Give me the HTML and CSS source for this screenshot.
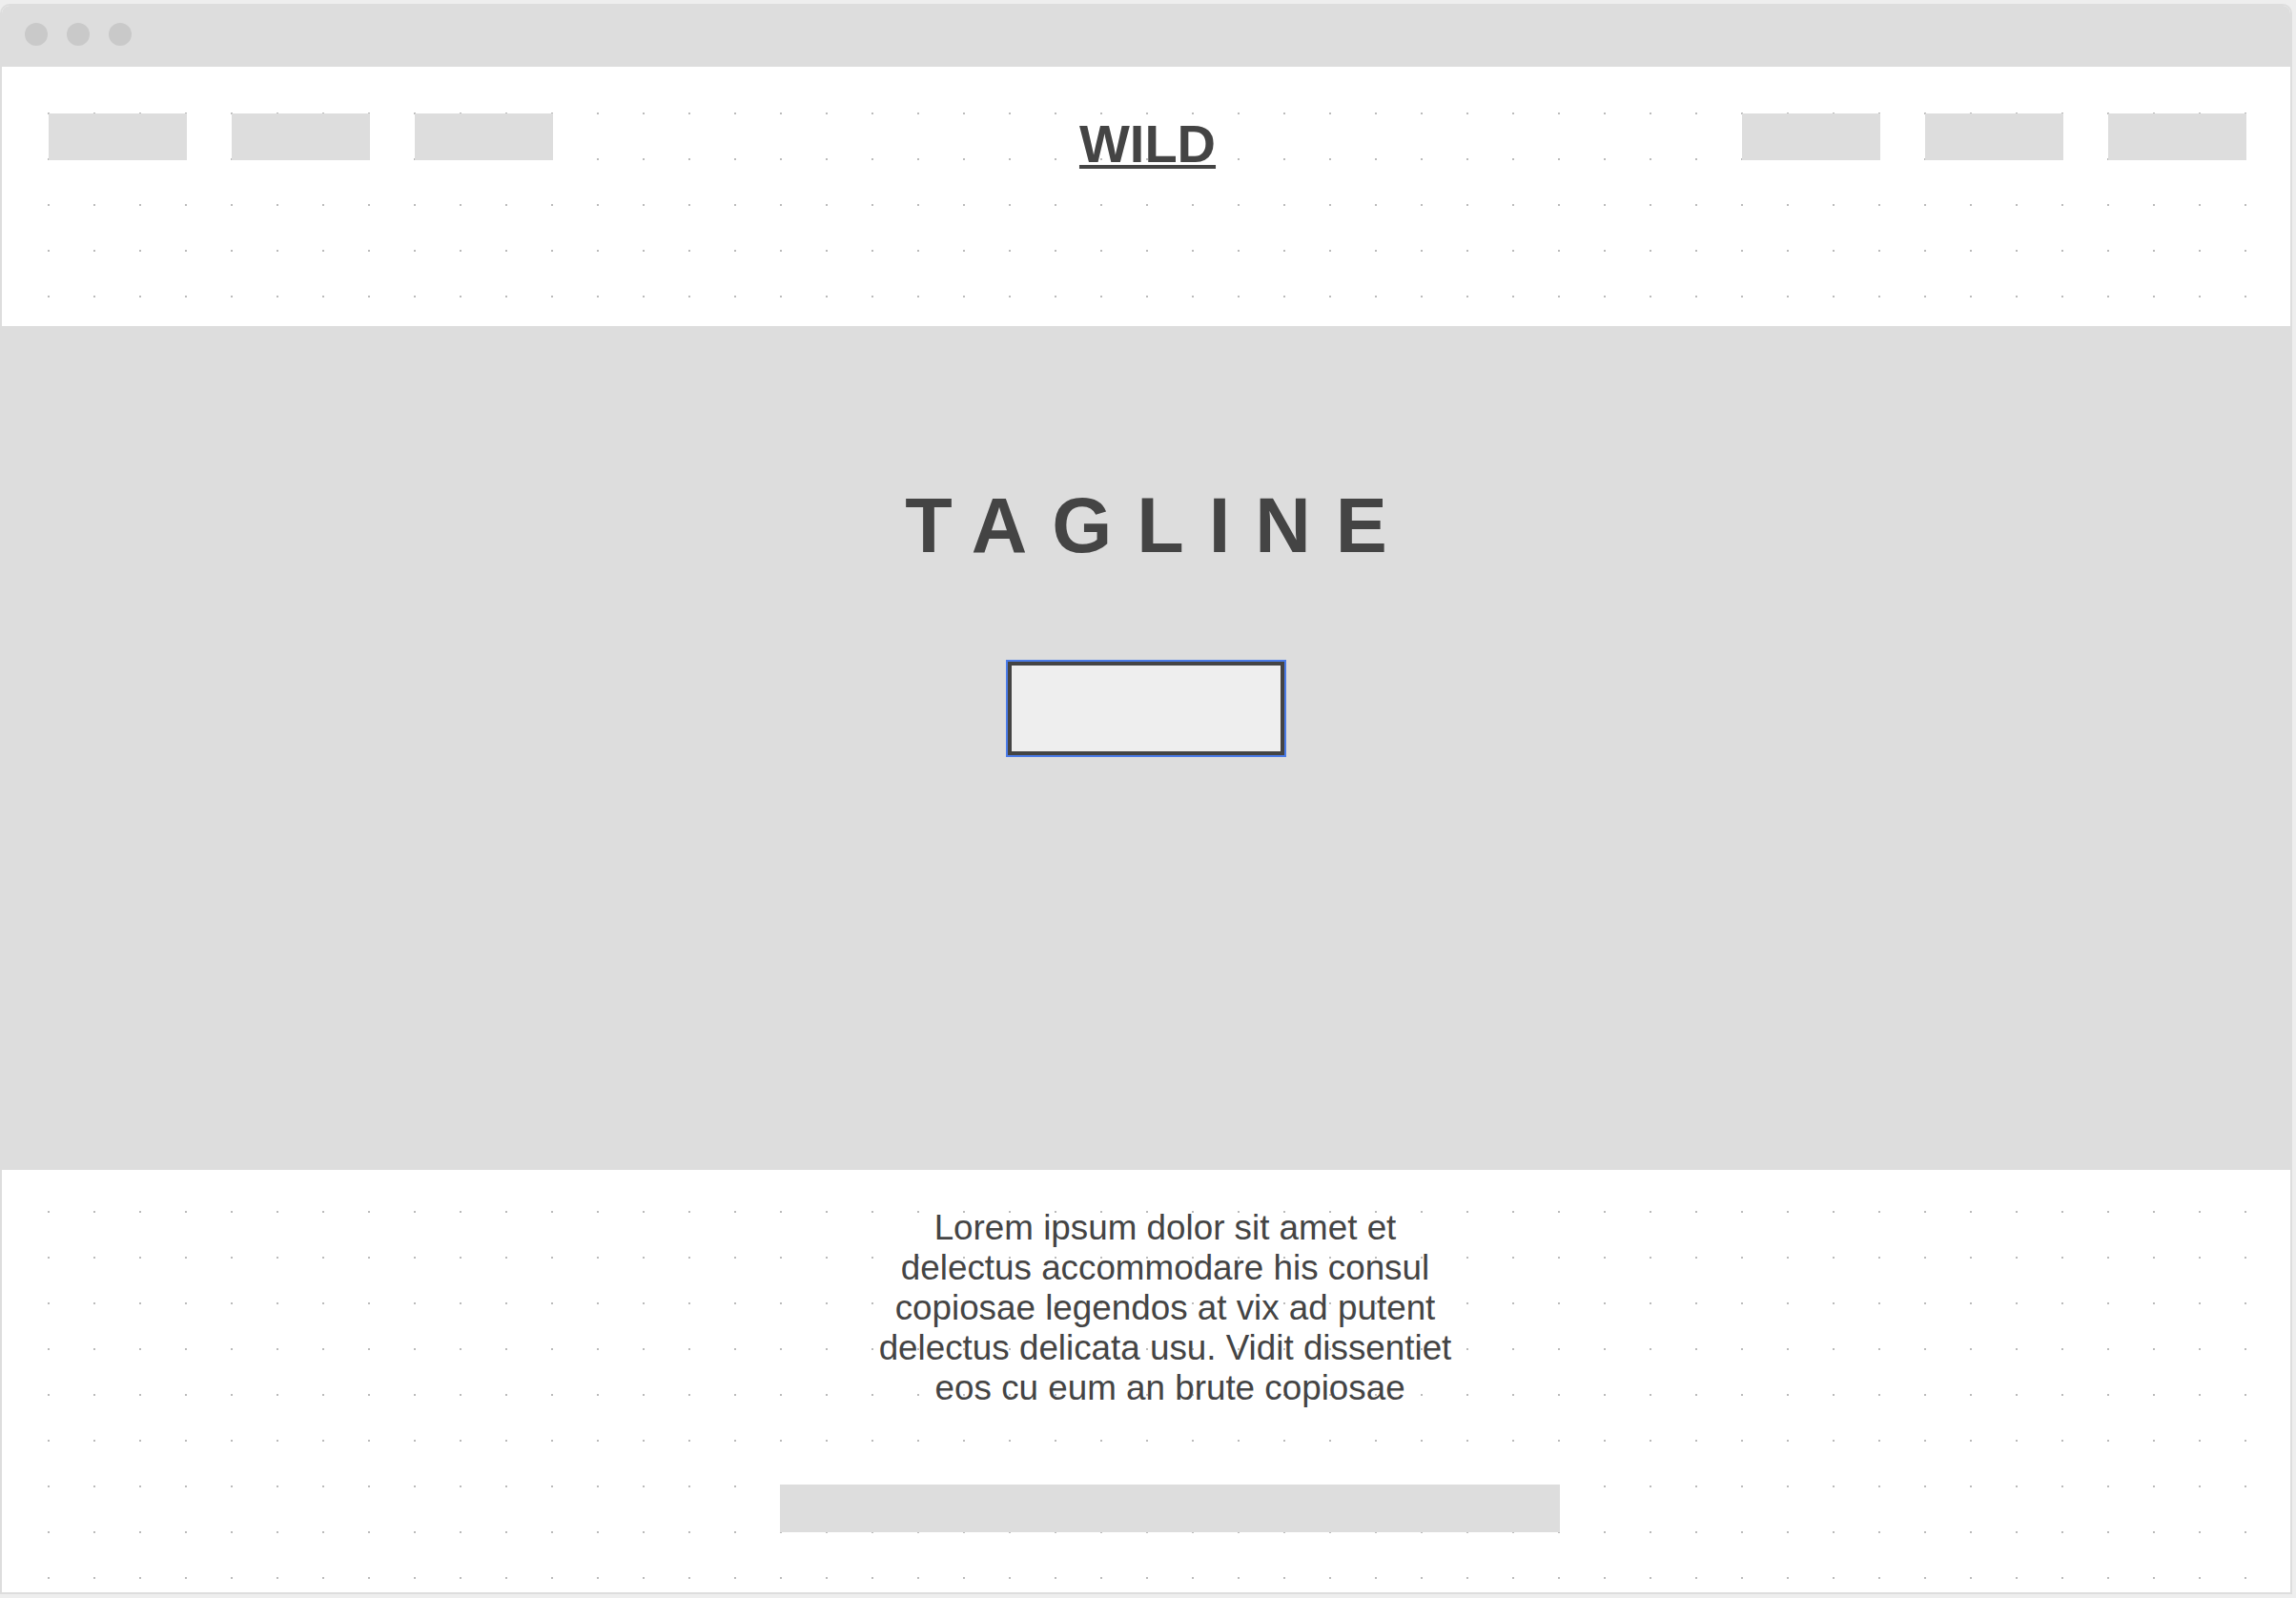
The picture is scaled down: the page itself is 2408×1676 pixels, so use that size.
FILE: index.html
```html
<!DOCTYPE html>
<html lang="en">
<head>
<meta charset="utf-8">
<title>WILD</title>
<link rel="stylesheet" href="styles.css">
</head>
<body>
<div class="window">
  <div class="titlebar">
    <span class="light"></span>
    <span class="light"></span>
    <span class="light"></span>
  </div>
  <div class="canvas">
    <header class="header">
      <nav class="nav nav-left">
        <span class="nav-box"></span>
        <span class="nav-box"></span>
        <span class="nav-box"></span>
      </nav>
      <a class="logo" href="#">WILD</a>
      <nav class="nav nav-right">
        <span class="nav-box"></span>
        <span class="nav-box"></span>
        <span class="nav-box"></span>
      </nav>
    </header>
    <section class="hero">
      <h1 class="tagline">TAGLINE</h1>
      <button class="cta" type="button"></button>
    </section>
    <section class="lower">
      <p class="copy">Lorem ipsum dolor sit amet et delectus accommodare his consul copiosae legendos at vix ad putent delectus delicata usu. Vidit dissentiet &nbsp;eos cu eum an brute copiosae</p>
      <div class="footer-bar"></div>
    </section>
  </div>
</div>
</body>
</html>
```

FILE: styles.css
```css
* {
  box-sizing: border-box;
}

html, body {
  margin: 0;
  padding: 0;
}

body {
  background: #eeeeee;
  padding-top: 4px;
  font-family: "Liberation Sans", Arial, sans-serif;
  color: #444444;
}

.window {
  width: 2404px;
  height: 1668px;
  border: 2px solid #dddddd;
  border-radius: 10px 10px 0 0;
  overflow: hidden;
  background: #ffffff;
  display: flex;
  flex-direction: column;
}

.titlebar {
  height: 64px;
  flex: none;
  background: #dddddd;
  display: flex;
  align-items: flex-start;
  gap: 20px;
  padding: 18px 0 0 24px;
}

.light {
  width: 24px;
  height: 24px;
  border-radius: 50%;
  background: #c9c9c9;
}

.canvas {
  flex: 1;
  display: flex;
  flex-direction: column;
  background-color: #ffffff;
  background-image: conic-gradient(from 270deg at 2px 2px, #bbbbbb 90deg, transparent 0);
  background-size: 48px 48px;
  background-position: 0 0;
  box-shadow: inset 2px 2px 0 #ffffff;
}

.header {
  height: 272px;
  flex: none;
  display: grid;
  grid-template-columns: 1fr auto 1fr;
  align-items: start;
  padding: 49px 46px 0 49px;
}

.nav {
  display: flex;
  gap: 47px;
}

.nav-right {
  justify-content: flex-end;
}

.nav-box {
  width: 145px;
  height: 49px;
  background: #dddddd;
}

.logo {
  display: block;
  padding-top: 4px;
  font-size: 56px;
  line-height: 56px;
  font-weight: 700;
  color: #444444;
  text-decoration: underline;
  text-decoration-thickness: 4px;
  text-underline-offset: 3px;
}

.hero {
  height: 885px;
  flex: none;
  background: #dddddd;
  display: flex;
  flex-direction: column;
  align-items: center;
}

.tagline {
  margin: 169px 0 0 0;
  padding-left: 26px;
  font-size: 81px;
  line-height: 81px;
  font-weight: 700;
  letter-spacing: 26px;
  color: #444444;
}

.cta {
  margin-top: 102px;
  width: 290px;
  height: 98px;
  padding: 0;
  background: #eeeeee;
  border: 4px solid #444444;
  border-radius: 0;
  outline: 2px solid #4a7be8;
  outline-offset: 0;
}

.lower {
  flex: 1;
  display: flex;
  flex-direction: column;
  align-items: flex-start;
}

.copy {
  margin: 40px 0 0 910px;
  width: 620px;
  font-size: 36.8px;
  line-height: 42px;
  text-align: center;
  color: #444444;
}

.footer-bar {
  margin: 80px 0 0 816px;
  width: 818px;
  height: 50px;
  background: #dddddd;
}
```
